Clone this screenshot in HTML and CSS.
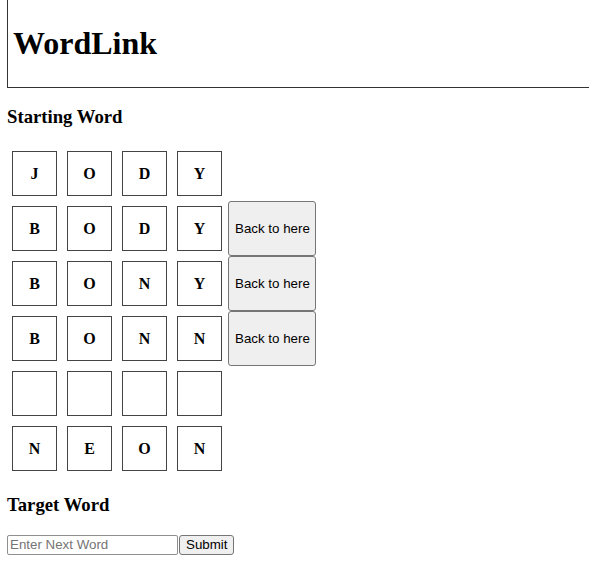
FILE: index.html
```html
<!DOCTYPE html>
<html lang="en">
<head>
    <meta charset="UTF-8">
    <meta name="viewport" content="width=device-width, initial-scale=1.0">
    <title>WordLink</title>
    <link rel="stylesheet" href="styles.css">
</head>
<body>

<header class="title-bar">
    <h1>WordLink</h1>
</header>

<main class="page">
    <h3 class="section-label">Starting Word</h3>

    <div class="board">
        <div class="word-row">
            <div class="tile">J</div>
            <div class="tile">O</div>
            <div class="tile">D</div>
            <div class="tile">Y</div>
        </div>
        <div class="word-row">
            <div class="tile">B</div>
            <div class="tile">O</div>
            <div class="tile">D</div>
            <div class="tile">Y</div>
            <button class="back-btn">Back to here</button>
        </div>
        <div class="word-row">
            <div class="tile">B</div>
            <div class="tile">O</div>
            <div class="tile">N</div>
            <div class="tile">Y</div>
            <button class="back-btn">Back to here</button>
        </div>
        <div class="word-row">
            <div class="tile">B</div>
            <div class="tile">O</div>
            <div class="tile">N</div>
            <div class="tile">N</div>
            <button class="back-btn">Back to here</button>
        </div>
        <!-- next guess goes here -->
        <div class="word-row">
            <div class="tile"></div>
            <div class="tile"></div>
            <div class="tile"></div>
            <div class="tile"></div>
        </div>
        <div class="word-row">
            <div class="tile">N</div>
            <div class="tile">E</div>
            <div class="tile">O</div>
            <div class="tile">N</div>
        </div>
    </div>

    <h3 class="section-label">Target Word</h3>

    <div class="entry">
        <input type="text" class="word-input" placeholder="Enter Next Word">
        <button class="submit-btn">Submit</button>
    </div>
</main>

</body>
</html>
```

FILE: styles.css
```css
body {
    font-family: "Liberation Serif", "Times New Roman", serif;
    margin: 0;
    color: #000;
    background: #fff;
}
.title-bar {
    margin-left: 7px;
    border-left: 1px solid #333;
    border-bottom: 1px solid #333;
    padding: 25px 5px 25px 5px;
}
.title-bar h1 {
    margin: 0;
    font-size: 32px;
}
.page {
    padding: 0 7px;
}
.section-label {
    font-size: 18.72px;
    margin: 17.72px 0 18.72px;
}
.word-row {
    display: flex;
    align-items: stretch;
}
.tile {
    width: 43px;
    height: 43px;
    margin: 5px;
    border: 1px solid #444;
    display: flex;
    justify-content: center;
    align-items: center;
    font-weight: bold;
    font-size: 16px;
}
.back-btn, .submit-btn {
    font-family: "Liberation Sans", Arial, sans-serif;
    font-size: 13.33px;
    color: #000;
    background-color: #efefef;
    border: 1px solid #767676;
    border-radius: 3px;
    padding: 1px 6px;
    white-space: nowrap;
}
.back-btn {
    margin-left: 1px;
    width: 88px;
}
.entry {
    display: flex;
    gap: 1px;
}
.word-input {
    width: 171px;
    height: 20px;
    box-sizing: border-box;
    font-family: "Liberation Sans", Arial, sans-serif;
    font-size: 13.33px;
    padding: 1px 2px;
    border: 1px solid #8f8f8f;
    border-radius: 2px;
}
.word-input::placeholder {
    color: #757575;
}
.submit-btn {
    height: 20px;
    padding: 0 6px;
}
```
